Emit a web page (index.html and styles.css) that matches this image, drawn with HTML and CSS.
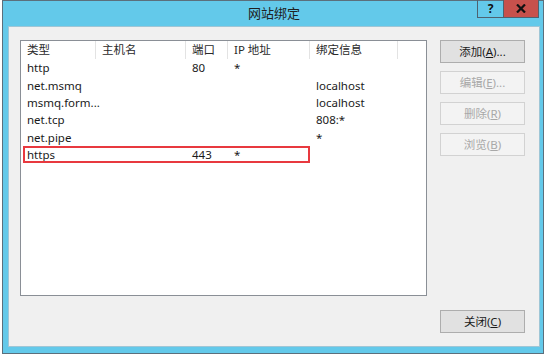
FILE: index.html
```html
<!DOCTYPE html>
<html lang="zh-CN">
<head>
    <meta charset="UTF-8">
    <title>网站绑定</title>
    <link rel="stylesheet" href="styles.css">
</head>
<body>
    <div class="window">
        <div class="titlebar">
            <span class="title">网站绑定</span>
            <div class="caption-buttons">
                <span class="cap-btn help">?</span>
                <span class="cap-btn close">
                    <svg width="10" height="9" viewBox="0 0 10 9"><path d="M1 0.5 L9 8.5 M9 0.5 L1 8.5" stroke="#111" stroke-width="2.2"/></svg>
                </span>
            </div>
        </div>

        <div class="client">
            <div class="main">
                <div class="listview">
                    <div class="row header">
                        <span class="c1">类型</span>
                        <span class="c2">主机名</span>
                        <span class="c3">端口</span>
                        <span class="c4">IP 地址</span>
                        <span class="c5">绑定信息</span>
                        <span class="c6"></span>
                    </div>
                    <div class="row">
                        <span class="c1">http</span><span class="c2"></span><span class="c3">80</span><span class="c4">*</span><span class="c5"></span>
                    </div>
                    <div class="row">
                        <span class="c1">net.msmq</span><span class="c2"></span><span class="c3"></span><span class="c4"></span><span class="c5">localhost</span>
                    </div>
                    <div class="row">
                        <span class="c1">msmq.form...</span><span class="c2"></span><span class="c3"></span><span class="c4"></span><span class="c5">localhost</span>
                    </div>
                    <div class="row">
                        <span class="c1">net.tcp</span><span class="c2"></span><span class="c3"></span><span class="c4"></span><span class="c5">808:*</span>
                    </div>
                    <div class="row">
                        <span class="c1">net.pipe</span><span class="c2"></span><span class="c3"></span><span class="c4"></span><span class="c5">*</span>
                    </div>
                    <div class="row marked">
                        <span class="c1">https</span><span class="c2"></span><span class="c3">443</span><span class="c4">*</span><span class="c5"></span>
                    </div>
                </div>

                <div class="side-buttons">
                    <button class="btn">添加(<u>A</u>)...</button>
                    <button class="btn" disabled>编辑(<u>E</u>)...</button>
                    <button class="btn" disabled>删除(<u>R</u>)</button>
                    <button class="btn" disabled>浏览(<u>B</u>)</button>
                </div>
            </div>

            <div class="footer">
                <button class="btn">关闭(<u>C</u>)</button>
            </div>
        </div>
    </div>
</body>
</html>
```

FILE: styles.css
```css
body {
    margin: 0;
    background-color: #ffffff;
    font-family: "Noto Sans", "Noto Sans CJK SC", sans-serif;
    font-size: 11.5px;
    color: #1a1a1a;
}

.window {
    margin-left: 2px;
    width: 532px;
    height: 352px;
    border: 1px solid #5b6f7c;
    background-color: #63c9ea;
    padding: 0 3px 0 5px;
    display: flex;
    flex-direction: column;
}

.titlebar {
    height: 25px;
    position: relative;
    display: flex;
    justify-content: center;
    align-items: center;
}

.title {
    font-size: 13px;
    color: #202020;
    margin-top: -2px;
}

.caption-buttons {
    position: absolute;
    top: -1px;
    right: 1px;
    display: flex;
}

.cap-btn {
    height: 18px;
    display: flex;
    align-items: center;
    justify-content: center;
    border: 1px solid #4e6270;
    border-top: none;
    box-sizing: border-box;
}

.help {
    width: 26px;
    font-weight: bold;
    font-size: 12px;
    color: #111;
    border-right: none;
}

.close {
    width: 36px;
    background-color: #c7514c;
}

.client {
    flex: 1;
    margin-bottom: 6px;
    background-color: #f0f0f0;
    border: 1px solid #9fc6d6;
    padding: 13px 14px 0 11px;
    display: flex;
    flex-direction: column;
}

.main {
    display: flex;
    gap: 13px;
}

.listview {
    width: 405px;
    height: 254px;
    border: 1px solid #8a8f96;
    background-color: #ffffff;
}

.row {
    display: flex;
    height: 17.4px;
    align-items: center;
    position: relative;
}

.row span {
    padding-left: 6px;
    box-sizing: border-box;
    white-space: nowrap;
}

.row.header {
    height: 18px;
    color: #2a2a2a;
}

.row.header span {
    height: 18px;
    line-height: 18px;
    border-right: 1px solid #e3e3e3;
}

.row.header .c6 {
    border-right: none;
}

.c1 { width: 75px; }
.c2 { width: 90px; }
.c3 { width: 42px; padding-left: 5px; }
.c4 { width: 82px; padding-left: 5px; }
.c5 { width: 88px; padding-left: 4px; }
.c6 { flex: 1; }

.row.marked::after {
    content: "";
    position: absolute;
    left: 2px;
    top: 0;
    width: 287px;
    height: 17px;
    border: 2px solid #e8393f;
    box-sizing: border-box;
}

.side-buttons {
    display: flex;
    flex-direction: column;
    gap: 8px;
}

.btn {
    width: 85px;
    height: 23px;
    font-family: "Noto Sans", "Noto Sans CJK SC", sans-serif;
    font-size: 11.5px;
    color: #1a1a1a;
    background-color: #e1e1e1;
    border: 1px solid #adadad;
    padding: 0;
    line-height: 1;
}

.btn:disabled {
    color: #a8a8a8;
    background-color: #f3f3f3;
    border-color: #d2d2d2;
}

.footer {
    display: flex;
    justify-content: flex-end;
    margin-top: 14px;
}
```
